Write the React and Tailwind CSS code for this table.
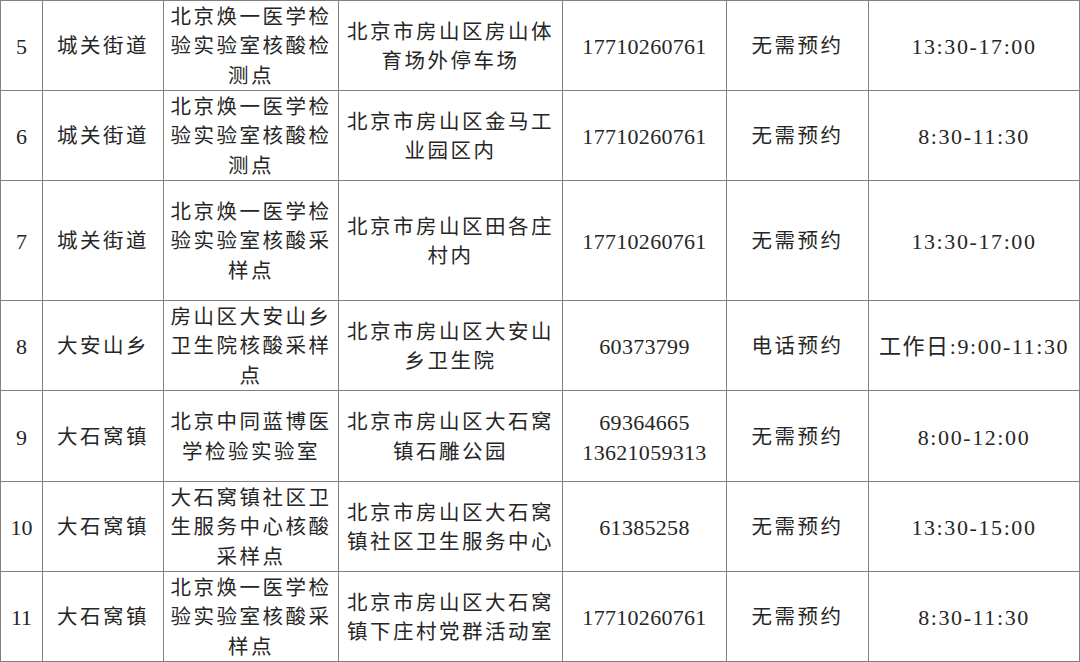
import React from "react";

const rows = [
  {
    no: "5",
    town: "城关街道",
    site: ["北京焕一医学检", "验实验室核酸检", "测点"],
    addr: ["北京市房山区房山体", "育场外停车场"],
    phone: ["17710260761"],
    booking: "无需预约",
    time: "13:30-17:00",
    h: "h-[90px]",
  },
  {
    no: "6",
    town: "城关街道",
    site: ["北京焕一医学检", "验实验室核酸检", "测点"],
    addr: ["北京市房山区金马工", "业园区内"],
    phone: ["17710260761"],
    booking: "无需预约",
    time: "8:30-11:30",
    h: "h-[90px]",
  },
  {
    no: "7",
    town: "城关街道",
    site: ["北京焕一医学检", "验实验室核酸采", "样点"],
    addr: ["北京市房山区田各庄", "村内"],
    phone: ["17710260761"],
    booking: "无需预约",
    time: "13:30-17:00",
    h: "h-[120px]",
  },
  {
    no: "8",
    town: "大安山乡",
    site: ["房山区大安山乡", "卫生院核酸采样", "点"],
    addr: ["北京市房山区大安山", "乡卫生院"],
    phone: ["60373799"],
    booking: "电话预约",
    time: "工作日:9:00-11:30",
    h: "h-[90px]",
  },
  {
    no: "9",
    town: "大石窝镇",
    site: ["北京中同蓝博医", "学检验实验室"],
    addr: ["北京市房山区大石窝", "镇石雕公园"],
    phone: ["69364665", "13621059313"],
    booking: "无需预约",
    time: "8:00-12:00",
    h: "h-[91px]",
  },
  {
    no: "10",
    town: "大石窝镇",
    site: ["大石窝镇社区卫", "生服务中心核酸", "采样点"],
    addr: ["北京市房山区大石窝", "镇社区卫生服务中心"],
    phone: ["61385258"],
    booking: "无需预约",
    time: "13:30-15:00",
    h: "h-[90px]",
  },
  {
    no: "11",
    town: "大石窝镇",
    site: ["北京焕一医学检", "验实验室核酸采", "样点"],
    addr: ["北京市房山区大石窝", "镇下庄村党群活动室"],
    phone: ["17710260761"],
    booking: "无需预约",
    time: "8:30-11:30",
    h: "h-[90px]",
  },
];

const font = "font-['Liberation_Serif','Noto_Sans_CJK_SC',serif]";
const cell = "flex flex-col items-center justify-center text-center pt-[3px] border-r border-b border-[#808080] overflow-hidden";
const cjk = "text-[20.5px] tracking-[2.5px] leading-[29.5px]";
const num = "text-[22px] leading-[30px]";

const Lines = ({ lines }) => lines.map((l) => <div key={l} className="whitespace-nowrap">{l}</div>);

const Row = ({ r }) => (
  <>
    <div className={`${cell} ${r.h} ${num}`}>{r.no}</div>
    <div className={`${cell} ${r.h} ${cjk}`}>{r.town}</div>
    <div className={`${cell} ${r.h} ${cjk}`}>
      <Lines lines={r.site} />
    </div>
    <div className={`${cell} ${r.h} ${cjk}`}>
      <Lines lines={r.addr} />
    </div>
    <div className={`${cell} ${r.h} ${num} tracking-[0.3px]`}>
      <Lines lines={r.phone} />
    </div>
    <div className={`${cell} ${r.h} ${cjk}`}>{r.booking}</div>
    <div className={`${cell} ${r.h} text-[22px] leading-[30px] tracking-[1.6px] whitespace-nowrap`}>{r.time}</div>
  </>
);

export default function App() {
  return (
    <div className={`w-[1080px] h-[662px] bg-white overflow-hidden ${font} text-[#262626]`}>
      <div className="grid grid-cols-[42px_121px_175px_224px_164px_142px_211px] border-l border-t border-[#808080]">
        {rows.map((r) => (
          <Row key={r.no} r={r} />
        ))}
      </div>
    </div>
  );
}
